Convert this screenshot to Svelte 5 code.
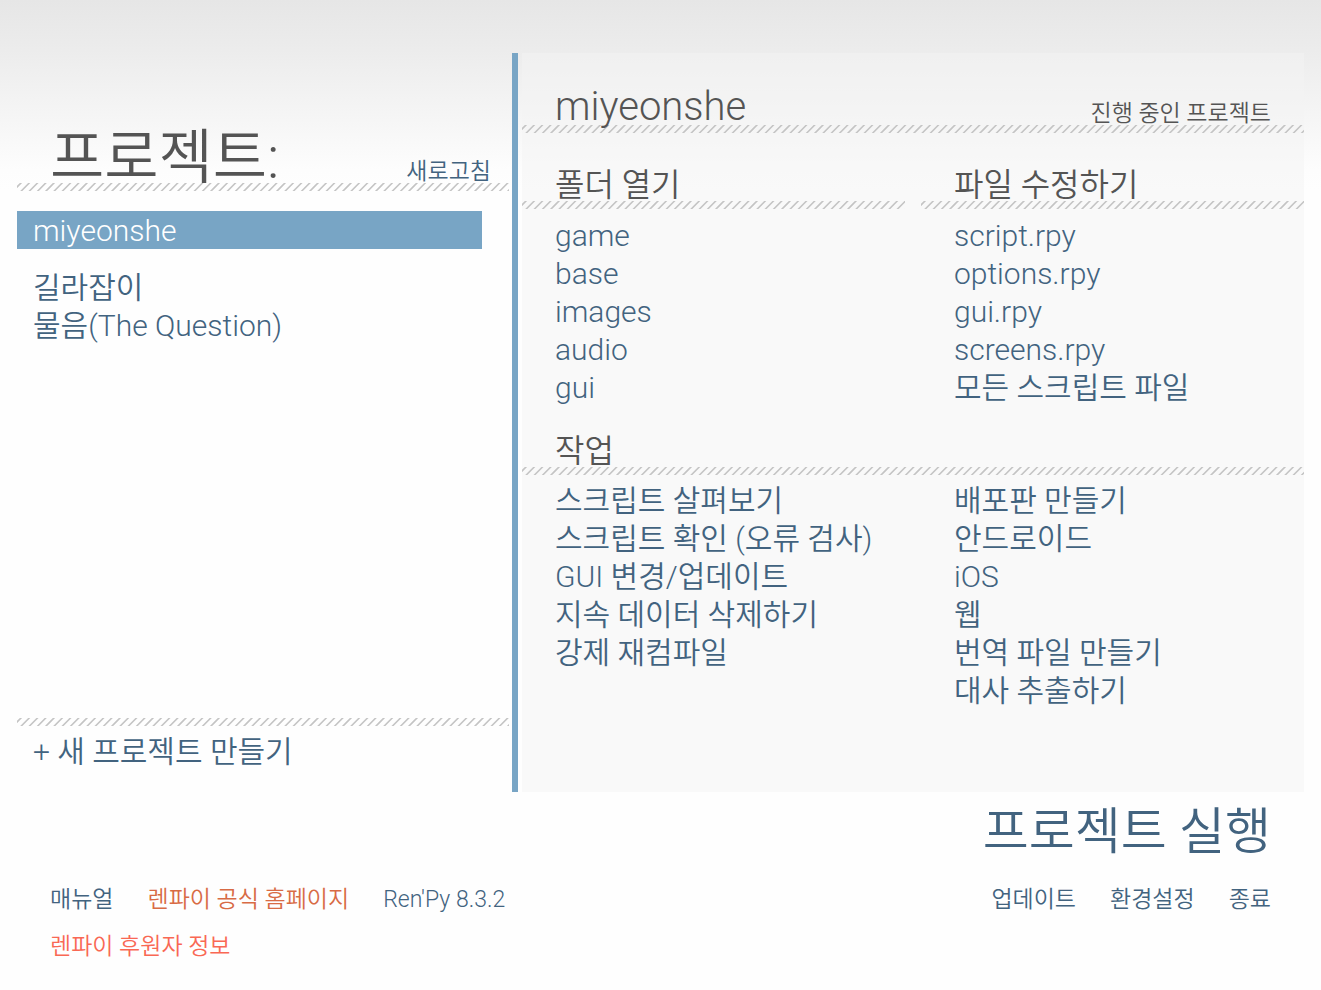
<script>
  const tutorials = ['길라잡이', '물음(The Question)'];
  const folders = ['game', 'base', 'images', 'audio', 'gui'];
  const files = ['script.rpy', 'options.rpy', 'gui.rpy', 'screens.rpy', '모든 스크립트 파일'];
  const actionsLeft = [
    '스크립트 살펴보기',
    '스크립트 확인 (오류 검사)',
    'GUI 변경/업데이트',
    '지속 데이터 삭제하기',
    '강제 재컴파일',
  ];
  const actionsRight = ['배포판 만들기', '안드로이드', 'iOS', '웹', '번역 파일 만들기', '대사 추출하기'];
</script>

{#snippet links(items)}
  <ul class="links">
    {#each items as item}
      <li><button>{item}</button></li>
    {/each}
  </ul>
{/snippet}

<div class="launcher">
  <main class="panels">
    <section class="projects">
      <header class="head projects-head">
        <h1>프로젝트:</h1>
        <button class="small">새로고침</button>
      </header>
      <div class="hatch"></div>
      <button class="selected">miyeonshe</button>
      {@render links(tutorials)}
      <div class="create">
        <div class="hatch"></div>
        <button>+ 새 프로젝트 만들기</button>
      </div>
    </section>

    <div class="frame">
      <section class="details">
        <header class="head details-head">
          <h2>miyeonshe</h2>
          <span class="small">진행 중인 프로젝트</span>
        </header>
        <div class="hatch"></div>

        <div class="columns top">
          <div>
            <h3>폴더 열기</h3>
            <div class="hatch"></div>
            {@render links(folders)}
          </div>
          <div>
            <h3>파일 수정하기</h3>
            <div class="hatch"></div>
            {@render links(files)}
          </div>
        </div>

        <h3 class="actions-title">작업</h3>
        <div class="hatch"></div>
        <div class="columns actions">
          {@render links(actionsLeft)}
          {@render links(actionsRight)}
        </div>
      </section>
    </div>
  </main>

  <div class="run"><button>프로젝트 실행</button></div>

  <footer>
    <nav>
      <button>매뉴얼</button>
      <a class="site" href="#site">렌파이 공식 홈페이지</a>
      <button>Ren'Py 8.3.2</button>
    </nav>
    <nav>
      <button>업데이트</button>
      <button>환경설정</button>
      <button>종료</button>
    </nav>
    <a class="sponsor" href="#sponsors">렌파이 후원자 정보</a>
  </footer>
</div>

<style>
  :global(body) {
    margin: 0;
    background: #fefefe;
  }

  .launcher {
    box-sizing: border-box;
    min-height: 100vh;
    padding: 53px 17px 20px;
    background: linear-gradient(#e6e6e6, #ececec 50px, #fdfdfd 170px, #fefefe 190px);
    color: #545454;
    font-family: Roboto, 'Noto Sans CJK KR', sans-serif;
    font-weight: 350;
    font-size: 30px;
    line-height: 38px;
  }

  button,
  a {
    display: block;
    margin: 0;
    padding: 0;
    border: 0;
    background: none;
    color: #42637f;
    font: inherit;
    text-align: left;
    text-decoration: none;
    white-space: nowrap;
    cursor: pointer;
  }

  h1,
  h2,
  h3 {
    margin: 0;
    font-weight: inherit;
    white-space: nowrap;
  }

  .panels {
    display: grid;
    grid-template-columns: 5fr 8fr;
    min-height: 739px;
  }

  .hatch {
    height: 8px;
    background: url("data:image/svg+xml,%3Csvg xmlns='http://www.w3.org/2000/svg' width='33' height='8'%3E%3Cpath d='M-4.5 8.5l9-9M3.75 8.5l9-9M12 8.5l9-9M20.25 8.5l9-9M28.5 8.5l9-9' stroke='%23c4c4c4' stroke-width='1.6'/%3E%3C/svg%3E")
      repeat-x;
  }

  .head {
    display: flex;
    justify-content: space-between;
    align-items: flex-end;
  }

  .small {
    font-size: 23px;
    line-height: 22px;
  }

  .projects {
    display: flex;
    flex-direction: column;
    padding-right: 3px;
  }

  .projects-head {
    height: 130px;
    padding: 0 18px 0 33px;
  }

  .projects-head h1 {
    font-size: 59px;
    line-height: 50px;
  }

  .selected {
    margin: 20px 27px 19px 0;
    padding: 2px 0 0 16px;
    line-height: 36px;
    background: #78a5c5;
    color: #fff;
  }

  .links {
    margin: 0;
    padding: 0;
    list-style: none;
  }

  .projects .links {
    padding: 1px 0 0 16px;
  }

  .create {
    margin-top: auto;
    padding-bottom: 20px;
  }

  .create button {
    padding: 7px 0 1px 16px;
  }

  .frame {
    display: flex;
    padding-left: 4px;
    border-left: 6px solid #78a5c5;
  }

  .details {
    flex: 1;
    background: rgba(244, 244, 244, 0.5);
  }

  .details-head {
    height: 72px;
    padding: 0 33px;
  }

  .details-head h2 {
    font-size: 40px;
    line-height: 36px;
  }

  .columns {
    display: grid;
    grid-template-columns: 1fr 1fr;
    column-gap: 16px;
  }

  .top {
    padding-top: 36px;
  }

  h3 {
    padding: 0 0 0 33px;
    font-size: 32px;
    line-height: 32px;
  }

  .details .links {
    padding: 8px 0 0 33px;
  }

  .details .actions .links {
    padding-top: 7px;
  }

  .actions-title {
    padding-top: 28px;
  }

  .run {
    display: flex;
    justify-content: flex-end;
    padding: 8px 33px 0;
    font-size: 50px;
    line-height: 64px;
  }

  footer {
    display: grid;
    grid-template-columns: auto auto;
    justify-content: space-between;
    row-gap: 19px;
    padding: 22px 33px 0;
    font-size: 23px;
    line-height: 28px;
  }

  nav {
    display: flex;
    gap: 34px;
  }

  .site {
    color: #d86b45;
  }

  .sponsor {
    color: #f96854;
  }
</style>
